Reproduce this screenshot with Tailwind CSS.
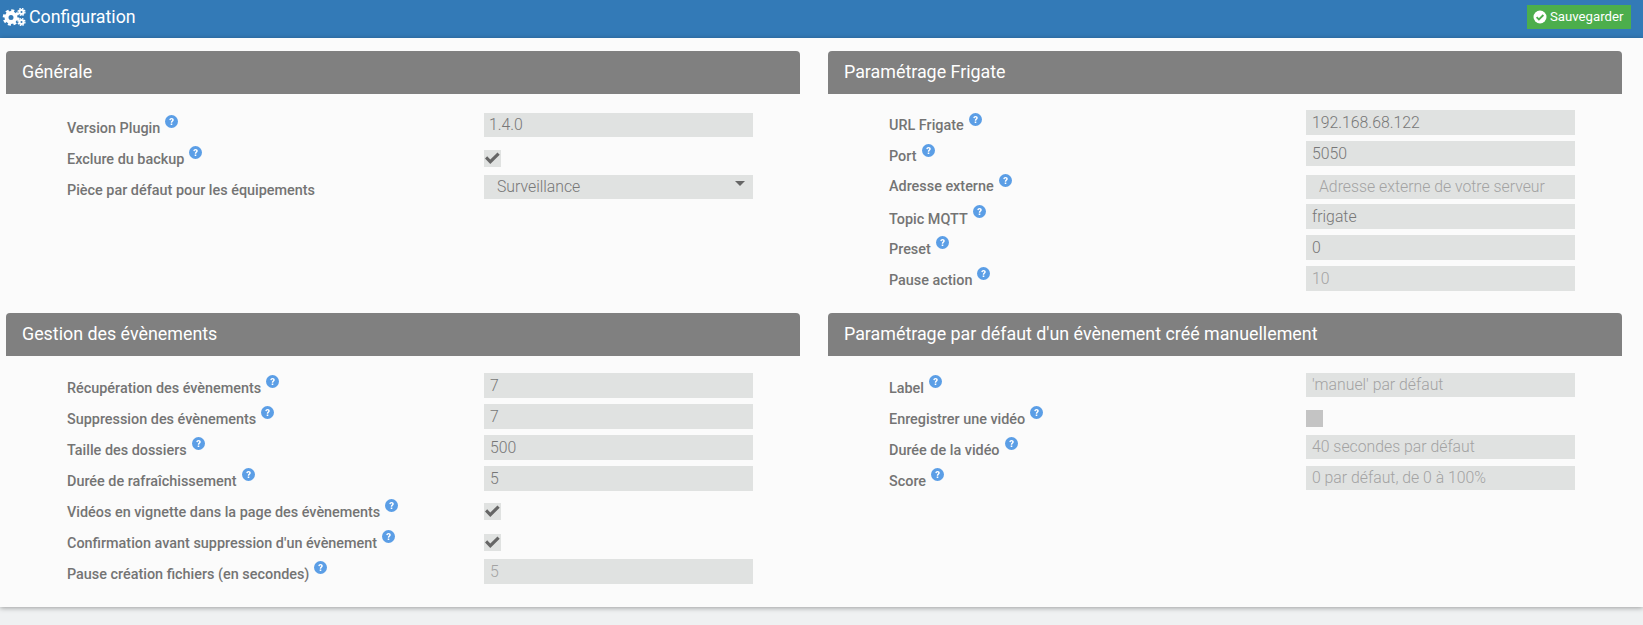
<!DOCTYPE html>
<html><head><meta charset="utf-8"><script src="https://cdn.jsdelivr.net/npm/@tailwindcss/browser@4"></script></head>
<body class="m-0 h-[625px] overflow-hidden bg-[#eff1f2] font-['Roboto',sans-serif] text-[#747474]">
<svg width="0" height="0" class="absolute"><defs>
<g id="q"><circle cx="6.5" cy="6.5" r="6.5" fill="#5b9ee6"/><path d="M4.3 5.1C4.4 3.7 5.3 3 6.6 3C7.9 3 8.8 3.8 8.8 4.9C8.8 6.3 7.2 6.3 7.2 7.7H5.8C5.8 5.8 7.2 5.8 7.2 5C7.2 4.6 7 4.3 6.5 4.3C6 4.3 5.8 4.6 5.7 5.2ZM5.7 8.4H7.3V10H5.7Z" fill="#fff"/></g>
<path id="c" d="M1 8.5L3.2 6.3L6.3 9.4L13.5 2.5L15.7 4.7L6.3 14Z" fill="#666"/>
</defs></svg>
<header class="h-[38px] bg-[#337ab7] flex items-center justify-between pl-[2px] pr-[12px] pb-[4px] text-white">
  <div class="flex items-center gap-[3px]">
    <svg width="24" height="18" viewBox="0 0 24 18"><circle cx="9" cy="9.5" r="4.5" fill="none" stroke="#fff" stroke-width="4"/><circle cx="9" cy="9.5" r="7" fill="none" stroke="#fff" stroke-width="2.6" stroke-dasharray="3 2.5"/><circle cx="19.5" cy="4" r="2" fill="none" stroke="#fff" stroke-width="2"/><circle cx="19.5" cy="4" r="3.4" fill="none" stroke="#fff" stroke-width="1.4" stroke-dasharray="1.6 1.07"/><circle cx="19.5" cy="14" r="2" fill="none" stroke="#fff" stroke-width="2"/><circle cx="19.5" cy="14" r="3.4" fill="none" stroke="#fff" stroke-width="1.4" stroke-dasharray="1.6 1.07"/></svg>
    <span class="text-[17.8px] leading-none">Configuration</span>
  </div>
  <button class="h-[24px] w-[104px] bg-[#4cae4c] flex items-center pl-[6px] gap-[3px] text-[13.2px] text-white"><svg width="14" height="14" viewBox="0 0 14 14"><circle cx="7" cy="7" r="6.5" fill="#fff"/><path d="M3.6 7.2L5.9 9.5L10.4 5" fill="none" stroke="#4cae4c" stroke-width="1.8"/></svg>Sauvegarder</button>
</header>
<main class="h-[569px] bg-[#fbfbfb] shadow-[0_1px_5px_rgba(0,0,0,0.35)] grid grid-cols-[828px_815px] grid-rows-[275px_294px]">

<section class="pl-[6px] pt-[13px]">
  <h2 class="w-[794px] h-[43px] bg-[#808080] rounded-t-[4px] text-white text-[17.85px] flex items-center pl-[16px]">Générale</h2>
  <div class="pt-[19px] pl-[61px] text-[14.4px] font-medium">
    <div class="h-[31px] flex items-start"><label class="w-[417px] pt-[5px] flex"><span>Version Plugin</span><svg width="13" height="13" class="ml-[5px] -mt-[3px]"><use href="#q"/></svg></label><div class="w-[269px] h-[24px] bg-[#e0e2e1] pl-[5px] text-[15.8px] font-light leading-[24px] text-[#777]">1.4.0</div></div>
    <div class="h-[31px] flex items-start"><label class="w-[417px] pt-[5px] flex"><span>Exclure du backup</span><svg width="13" height="13" class="ml-[5px] -mt-[3px]"><use href="#q"/></svg></label><div class="mt-[6px] w-[17px] h-[17px] bg-[#e0e2e1]"><svg width="17" height="17" viewBox="0 0 17 17"><use href="#c"/></svg></div></div>
    <div class="h-[31px] flex items-start"><label class="w-[417px] pt-[5px]">Pièce par défaut pour les équipements</label><div class="w-[269px] h-[24px] bg-[#e0e2e1] pl-[13px] text-[15.8px] font-light leading-[24px] text-[#777] relative">Surveillance<span class="absolute right-[8px] top-[6px] w-0 h-0 border-x-[5px] border-x-transparent border-t-[5px] border-t-[#666]"></span></div></div>
  </div>
</section>

<section class="pt-[13px]">
  <h2 class="w-[794px] h-[43px] bg-[#808080] rounded-t-[4px] text-white text-[17.85px] flex items-center pl-[16px]">Paramétrage Frigate</h2>
  <div class="pt-[16px] pl-[61px] text-[14.4px] font-medium">
    <div class="h-[31px] flex items-start"><label class="w-[417px] pt-[5px] flex"><span>URL Frigate</span><svg width="13" height="13" class="ml-[5px] -mt-[2px]"><use href="#q"/></svg></label><div class="w-[269px] h-[25px] bg-[#e0e2e1] pl-[6px] text-[15.8px] font-light leading-[25px] text-[#777]">192.168.68.122</div></div>
    <div class="h-[34px] flex items-start"><label class="w-[417px] pt-[5px] flex"><span>Port</span><svg width="13" height="13" class="ml-[5px] -mt-[2px]"><use href="#q"/></svg></label><div class="w-[269px] h-[25px] bg-[#e0e2e1] pl-[6px] text-[15.8px] font-light leading-[25px] text-[#777]">5050</div></div>
    <div class="h-[29px] flex items-start"><label class="w-[417px] pt-[1px] flex"><span>Adresse externe</span><svg width="13" height="13" class="ml-[5px] -mt-[2px]"><use href="#q"/></svg></label><div class="w-[269px] h-[24px] bg-[#e0e2e1] pl-[13px] text-[15.8px] font-light leading-[24px] text-[#a3a3a3]">Adresse externe de votre serveur</div></div>
    <div class="h-[31px] flex items-start"><label class="w-[417px] pt-[5px] flex"><span>Topic MQTT</span><svg width="13" height="13" class="ml-[5px] -mt-[4px]"><use href="#q"/></svg></label><div class="w-[269px] h-[25px] bg-[#e0e2e1] pl-[6px] text-[15.8px] font-light leading-[25px] text-[#777]">frigate</div></div>
    <div class="h-[31px] flex items-start"><label class="w-[417px] pt-[4px] flex"><span>Preset</span><svg width="13" height="13" class="ml-[5px] -mt-[3px]"><use href="#q"/></svg></label><div class="w-[269px] h-[25px] bg-[#e0e2e1] pl-[6px] text-[15.8px] font-light leading-[25px] text-[#777]">0</div></div>
    <div class="h-[31px] flex items-start"><label class="w-[417px] pt-[4px] flex"><span>Pause action</span><svg width="13" height="13" class="ml-[5px] -mt-[3px]"><use href="#q"/></svg></label><div class="w-[269px] h-[25px] bg-[#e0e2e1] pl-[6px] text-[15.8px] font-light leading-[25px] text-[#a3a3a3]">10</div></div>
  </div>
</section>

<section class="pl-[6px]">
  <h2 class="w-[794px] h-[43px] bg-[#808080] rounded-t-[4px] text-white text-[17.85px] flex items-center pl-[16px]">Gestion des évènements</h2>
  <div class="pt-[17px] pl-[61px] text-[14.4px] font-medium">
    <div class="h-[31px] flex items-start"><label class="w-[417px] pt-[5px] flex"><span>Récupération des évènements</span><svg width="13" height="13" class="ml-[5px] -mt-[3px]"><use href="#q"/></svg></label><div class="w-[269px] h-[25px] bg-[#e0e2e1] pl-[6px] text-[15.8px] font-light leading-[25px] text-[#777]">7</div></div>
    <div class="h-[31px] flex items-start"><label class="w-[417px] pt-[5px] flex"><span>Suppression des évènements</span><svg width="13" height="13" class="ml-[5px] -mt-[3px]"><use href="#q"/></svg></label><div class="w-[269px] h-[25px] bg-[#e0e2e1] pl-[6px] text-[15.8px] font-light leading-[25px] text-[#777]">7</div></div>
    <div class="h-[31px] flex items-start"><label class="w-[417px] pt-[5px] flex"><span>Taille des dossiers</span><svg width="13" height="13" class="ml-[5px] -mt-[3px]"><use href="#q"/></svg></label><div class="w-[269px] h-[25px] bg-[#e0e2e1] pl-[6px] text-[15.8px] font-light leading-[25px] text-[#777]">500</div></div>
    <div class="h-[31px] flex items-start"><label class="w-[417px] pt-[5px] flex"><span>Durée de rafraîchissement</span><svg width="13" height="13" class="ml-[5px] -mt-[3px]"><use href="#q"/></svg></label><div class="w-[269px] h-[25px] bg-[#e0e2e1] pl-[6px] text-[15.8px] font-light leading-[25px] text-[#777]">5</div></div>
    <div class="h-[31px] flex items-start"><label class="w-[417px] pt-[5px] flex"><span>Vidéos en vignette dans la page des évènements</span><svg width="13" height="13" class="ml-[5px] -mt-[3px]"><use href="#q"/></svg></label><div class="mt-[6px] w-[17px] h-[17px] bg-[#e0e2e1]"><svg width="17" height="17" viewBox="0 0 17 17"><use href="#c"/></svg></div></div>
    <div class="h-[31px] flex items-start"><label class="w-[417px] pt-[5px] flex"><span>Confirmation avant suppression d'un évènement</span><svg width="13" height="13" class="ml-[5px] -mt-[3px]"><use href="#q"/></svg></label><div class="mt-[6px] w-[17px] h-[17px] bg-[#e0e2e1]"><svg width="17" height="17" viewBox="0 0 17 17"><use href="#c"/></svg></div></div>
    <div class="h-[31px] flex items-start"><label class="w-[417px] pt-[5px] flex"><span>Pause création fichiers (en secondes)</span><svg width="13" height="13" class="ml-[5px] -mt-[3px]"><use href="#q"/></svg></label><div class="w-[269px] h-[25px] bg-[#e0e2e1] pl-[6px] text-[15.8px] font-light leading-[25px] text-[#a3a3a3]">5</div></div>
  </div>
</section>

<section>
  <h2 class="w-[794px] h-[43px] bg-[#808080] rounded-t-[4px] text-white text-[17.85px] flex items-center pl-[16px]">Paramétrage par défaut d'un évènement créé manuellement</h2>
  <div class="pt-[17px] pl-[61px] text-[14.4px] font-medium">
    <div class="h-[31px] flex items-start"><label class="w-[417px] pt-[5px] flex"><span>Label</span><svg width="13" height="13" class="ml-[5px] -mt-[3px]"><use href="#q"/></svg></label><div class="w-[269px] h-[24px] bg-[#e0e2e1] pl-[6px] text-[15.8px] font-light leading-[24px] text-[#a3a3a3]">'manuel' par défaut</div></div>
    <div class="h-[31px] flex items-start"><label class="w-[417px] pt-[5px] flex"><span>Enregistrer une vidéo</span><svg width="13" height="13" class="ml-[5px] -mt-[3px]"><use href="#q"/></svg></label><div class="mt-[6px] w-[17px] h-[17px] bg-[#c4c4c4]"></div></div>
    <div class="h-[31px] flex items-start"><label class="w-[417px] pt-[5px] flex"><span>Durée de la vidéo</span><svg width="13" height="13" class="ml-[5px] -mt-[3px]"><use href="#q"/></svg></label><div class="w-[269px] h-[24px] bg-[#e0e2e1] pl-[6px] text-[15.8px] font-light leading-[24px] text-[#a3a3a3]">40 secondes par défaut</div></div>
    <div class="h-[31px] flex items-start"><label class="w-[417px] pt-[5px] flex"><span>Score</span><svg width="13" height="13" class="ml-[5px] -mt-[3px]"><use href="#q"/></svg></label><div class="w-[269px] h-[24px] bg-[#e0e2e1] pl-[6px] text-[15.8px] font-light leading-[24px] text-[#a3a3a3]">0 par défaut, de 0 à 100%</div></div>
  </div>
</section>
</main>
</body></html>
